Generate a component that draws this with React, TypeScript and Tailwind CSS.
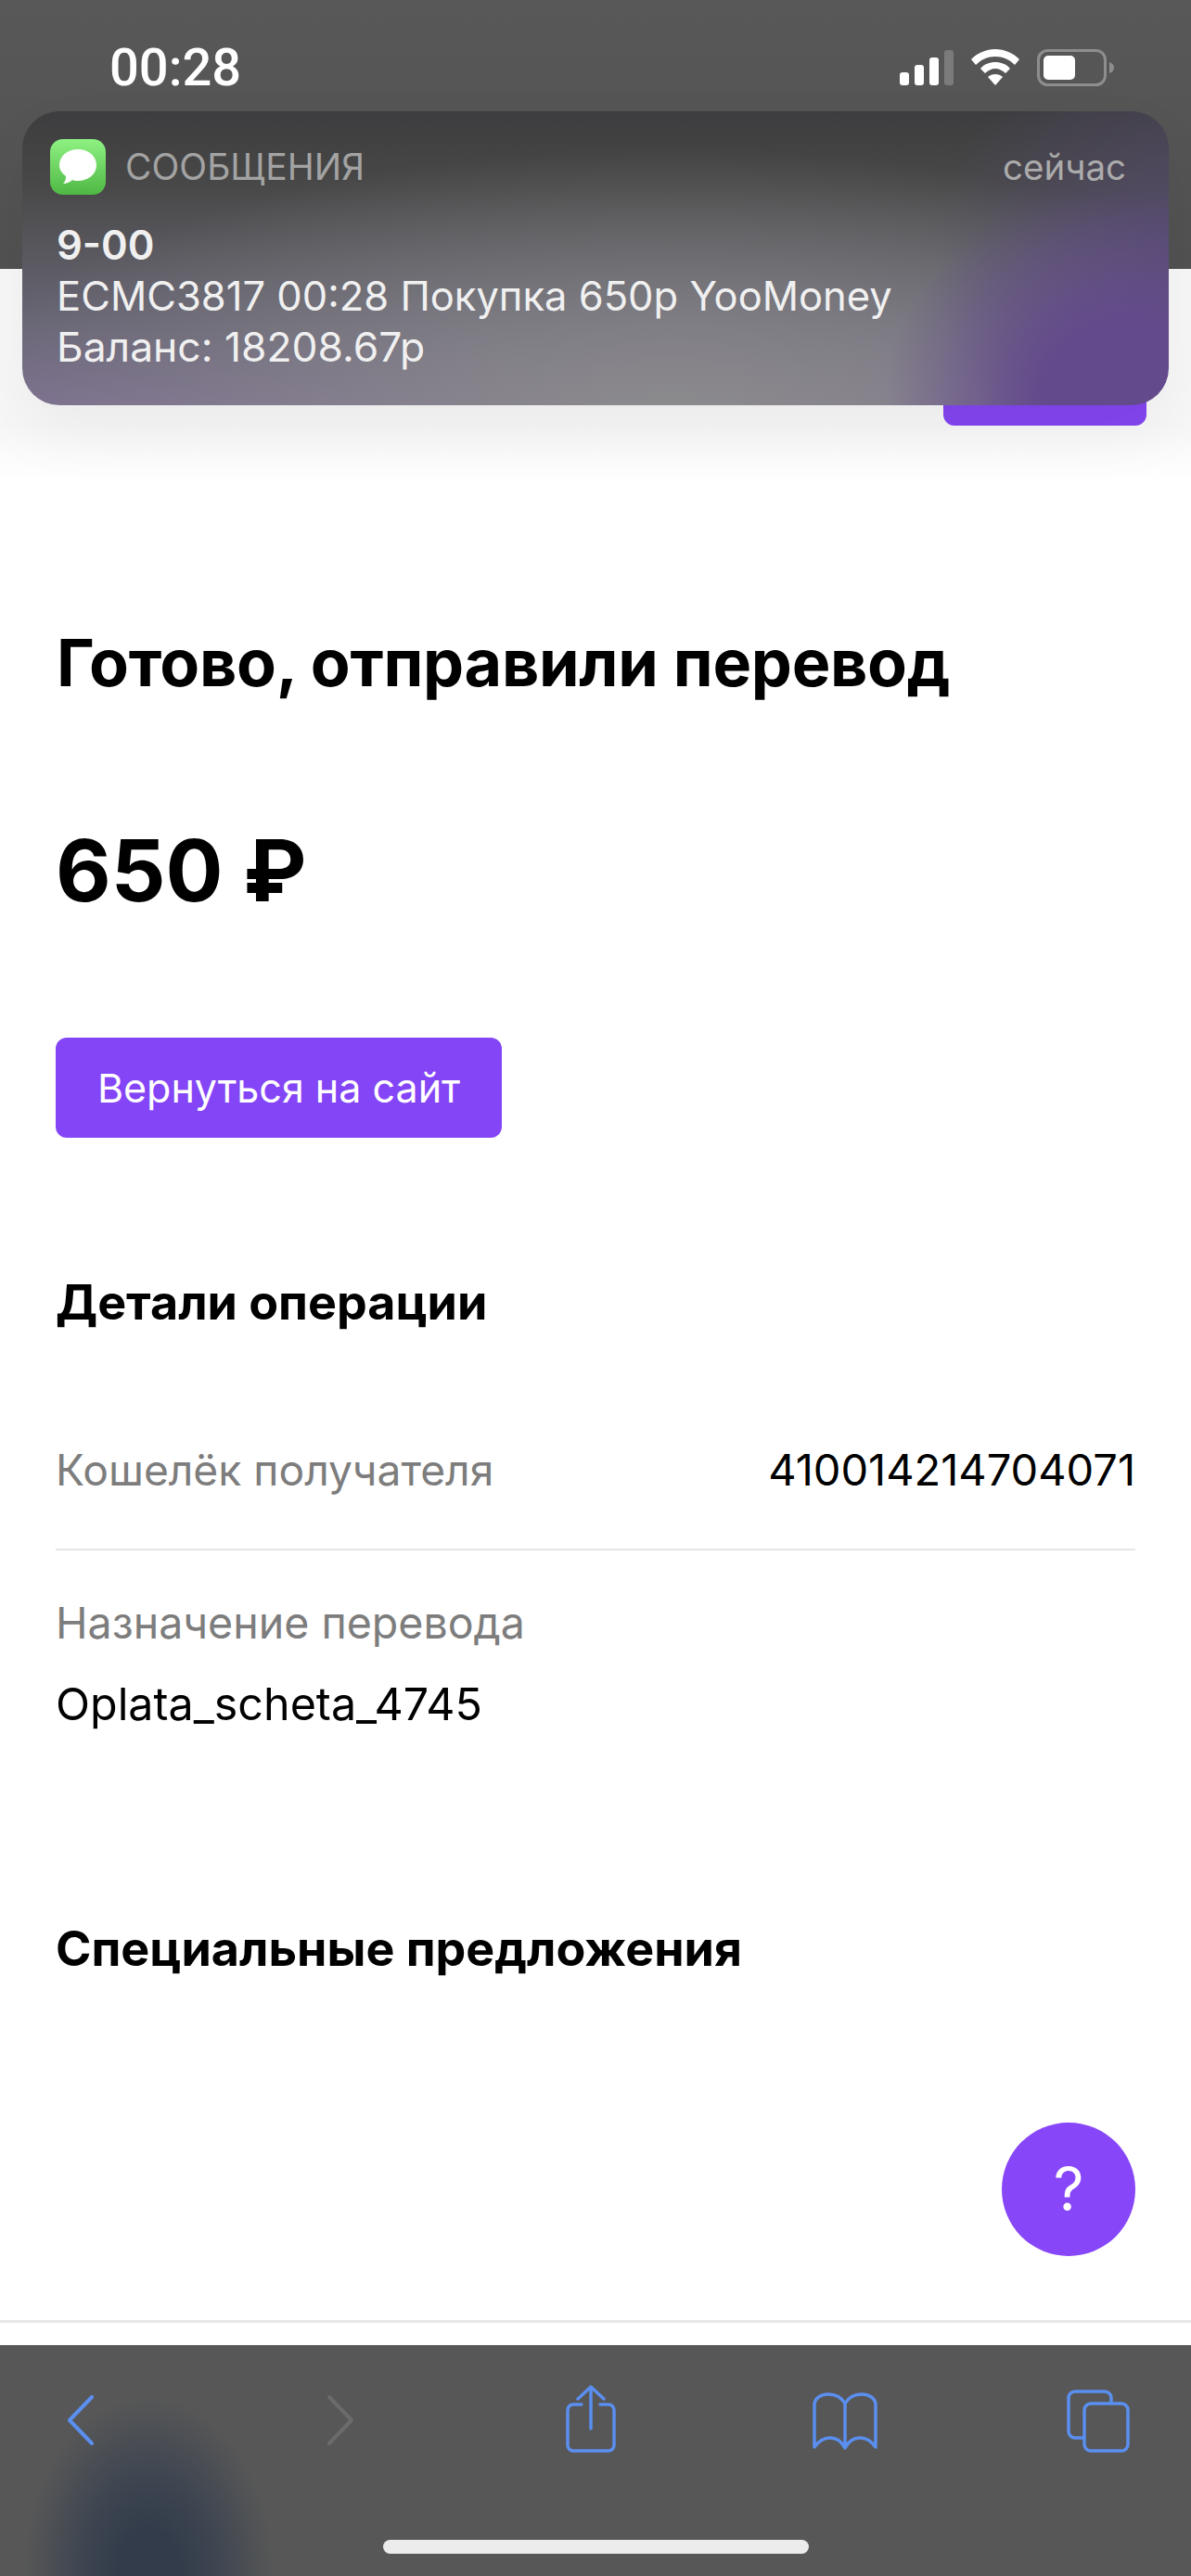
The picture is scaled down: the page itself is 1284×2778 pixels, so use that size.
export default function App() {
  return (
    <div className="relative flex h-[2778px] w-[1284px] flex-col overflow-hidden bg-white font-['Inter',sans-serif] text-black">
      <div className="flex h-[290px] shrink-0 items-start justify-between bg-[linear-gradient(#585858,#515151)] pl-[118px] pr-[82px] pt-[44px]">
        <span className="font-['Roboto',sans-serif] text-[56px] font-medium leading-[58px] text-white">00:28</span>
        <div className="mt-[9px] flex items-center gap-[19px]">
          <svg width="58" height="38" viewBox="0 0 58 38">
            <rect x="0" y="24" width="10" height="14" rx="3" fill="#fff" />
            <rect x="16" y="16" width="10" height="22" rx="3" fill="#fff" />
            <rect x="32" y="8" width="10" height="30" rx="3" fill="#fff" />
            <rect x="48" y="0" width="10" height="38" rx="3" fill="#7b7b7b" />
          </svg>
          <svg width="52" height="40" viewBox="0 0 52 40">
            <path d="M26 0C16 0 7 4 0 11l5 6c6-6 13-9 21-9s15 3 21 9l5-6C45 4 36 0 26 0Z" fill="#fff" />
            <path d="M26 14c-6 0-12 2-16 7l5 5c3-3 7-5 11-5s8 2 11 5l5-5c-4-5-10-7-16-7Z" fill="#fff" />
            <path d="M26 27c-3 0-6 1-8 3l8 9 8-9c-2-2-5-3-8-3Z" fill="#fff" />
          </svg>
          <svg width="84" height="40" viewBox="0 0 84 40">
            <rect x="1.5" y="1.5" width="72" height="37" rx="10" fill="none" stroke="#8e8e8e" strokeWidth="3" />
            <rect x="7" y="7" width="34" height="26" rx="5" fill="#fff" />
            <path d="M78 14c3 1 5 3 5 6s-2 5-5 6Z" fill="#8e8e8e" />
          </svg>
        </div>
      </div>

      <main className="flex min-h-0 flex-1 flex-col bg-[linear-gradient(#f7f7f7_0,#f7f7f7_170px,#ffffff_230px)]">
        <div className="flex shrink-0 justify-end pr-[48px]">
          <div className="h-[169px] w-[219px] rounded-b-[12px] bg-[#8345f0]" />
        </div>
        <div className="flex flex-1 flex-col px-[60px]">
          <h1 className="mt-[214px] h-[84px] whitespace-nowrap pl-[1px] text-[70px] font-bold leading-[84px] tracking-[-0.3px]">Готово, отправили перевод</h1>
          <div className="mt-[122px] h-[120px] text-[92px] font-bold leading-[120px]">650 ₽</div>
          <button className="mt-[120px] flex h-[108px] w-[481px] items-center justify-center rounded-[12px] bg-[#8445f6] text-[43px] leading-[56px] text-white">Вернуться на сайт</button>
          <h2 className="mt-[145px] h-[66px] text-[52px] font-bold leading-[66px]">Детали операции</h2>
          <div className="mt-[117px] flex h-[60px] items-center justify-between leading-[60px]">
            <span className="text-[46.2px] text-[#7d7d7d]">Кошелёк получателя</span>
            <span className="text-[47px]">410014214704071</span>
          </div>
          <div className="mt-[55px] h-[2px] bg-[#e6e6e6]" />
          <div className="mt-[48px] h-[60px] text-[46.5px] leading-[60px] text-[#7d7d7d]">Назначение перевода</div>
          <div className="mt-[28px] h-[60px] text-[48.4px] leading-[60px]">Oplata_scheta_4745</div>
          <h2 className="mt-[201px] h-[66px] text-[52px] font-bold leading-[66px]">Специальные предложения</h2>
          <div className="mt-[154px] flex justify-end">
            <button className="flex h-[144px] w-[144px] items-center justify-center rounded-full bg-[#8746f7] text-[64px] leading-none text-white">?</button>
          </div>
        </div>
        <div className="h-[3px] shrink-0 bg-[#e8e8e8]" />
        <div className="h-[24px] shrink-0 bg-white" />
      </main>

      <footer className="relative flex h-[249px] shrink-0 items-start bg-[radial-gradient(ellipse_135px_190px_at_160px_245px,#333c4a_25%,#3c4450_50%,#575757_100%)] bg-[#575757] pl-[72px] pt-[43px]">
        <svg width="29" height="54" viewBox="0 0 29 54" className="mt-[11px]" fill="none" stroke="#5a8ff0" strokeWidth="4" strokeLinecap="round" strokeLinejoin="round">
          <path d="M27 2 3 27l24 25" />
        </svg>
        <svg width="28" height="54" viewBox="0 0 28 54" className="ml-[252px] mt-[11px]" fill="none" stroke="#6b6b6b" strokeWidth="4" strokeLinecap="round" strokeLinejoin="round">
          <path d="M2 2l24 25L2 52" />
        </svg>
        <svg width="56" height="73" viewBox="0 0 56 73" className="ml-[228px]" fill="none" stroke="#5a8ff0" strokeWidth="3.5" strokeLinecap="round" strokeLinejoin="round">
          <path d="M18 21H9a6 6 0 0 0-6 6v38a6 6 0 0 0 6 6h38a6 6 0 0 0 6-6V27a6 6 0 0 0-6-6h-9" />
          <path d="M28 47V3M14 15 28 2l14 13" />
        </svg>
        <svg width="70" height="62" viewBox="0 0 70 62" className="ml-[211px] mt-[8px]" fill="none" stroke="#5a8ff0" strokeWidth="3.5" strokeLinecap="round" strokeLinejoin="round">
          <path d="M35 12C31 5 25 2 17 2 9 2 3 6 2 12v47c5-7 11-10 17-10 7 0 12 3 16 11 4-8 9-11 16-11 6 0 12 3 17 10V12c-1-6-7-10-15-10-8 0-14 3-18 10Zm0 0v47" />
        </svg>
        <svg width="68" height="68" viewBox="0 0 68 68" className="ml-[204px] mt-[5px]" fill="none" stroke="#5a8ff0" strokeWidth="3.5" strokeLinecap="round" strokeLinejoin="round">
          <path d="M48 14v-5a7 7 0 0 0-7-7H9a7 7 0 0 0-7 7v36a7 7 0 0 0 7 7h9" />
          <rect x="19" y="15" width="47" height="51" rx="7" />
        </svg>
        <div className="absolute bottom-[24px] left-[413px] h-[15px] w-[459px] rounded-full bg-[#ececec]" />
      </footer>

      <section className="absolute left-[24px] top-[120px] flex h-[317px] w-[1236px] flex-col overflow-hidden rounded-[40px] bg-[radial-gradient(ellipse_260px_230px_at_1190px_310px,#634a8c_35%,rgba(99,74,140,0.6)_60%,rgba(99,74,140,0)_100%),radial-gradient(ellipse_300px_260px_at_1280px_160px,rgba(84,74,110,0.9),rgba(84,74,110,0)_100%),radial-gradient(ellipse_800px_300px_at_700px_340px,#8c8c8c,rgba(140,140,140,0.5)_50%,rgba(140,140,140,0)_100%),linear-gradient(to_bottom,#3d3d3f_0%,#484848_25%,#5a5960_50%,#6a6678_75%,#7b6e90_100%)] shadow-[0_30px_70px_rgba(0,0,0,0.05)]">
        <div className="flex items-center justify-between pl-[30px] pr-[46px] pt-[30px]">
          <div className="flex items-center gap-[21px]">
            <div className="flex h-[60px] w-[60px] items-center justify-center rounded-[14px] bg-[linear-gradient(#8ef283,#4fb844)]">
              <svg width="44" height="44" viewBox="0 0 44 44">
                <path d="M22 3c11 0 20 7 20 17s-9 17-20 17c-2 0-4 0-6-1-2 2-6 4-10 4 2-2 3-4 3-8-4-3-7-7-7-12C2 10 11 3 22 3Z" fill="#fff" />
              </svg>
            </div>
            <span className="text-[39px] leading-[44px] text-[#a3a3a3]">СООБЩЕНИЯ</span>
          </div>
          <span className="text-[38.5px] leading-[44px] text-[#ababab]">сейчас</span>
        </div>
        <div className="pl-[37px] pt-[27px] text-[43.5px] leading-[55px] text-[#f0f0f0]">
          <div className="font-semibold">9-00</div>
          <div className="whitespace-nowrap">ECMC3817 00:28 Покупка 650р YooMoney</div>
          <div className="text-[44.4px]">Баланс: 18208.67р</div>
        </div>
      </section>
    </div>
  );
}
